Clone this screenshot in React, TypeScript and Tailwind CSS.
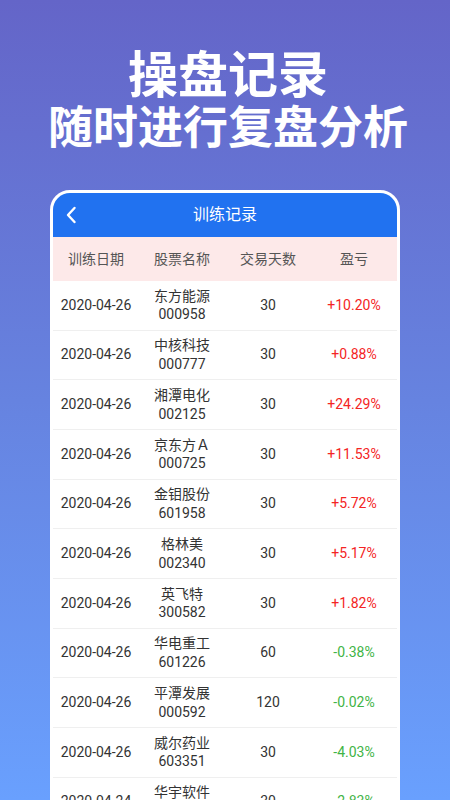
import React from 'react';

type Record = {
  date: string;
  name: string;
  code: string;
  days: number;
  pnl: string;
};

const records: Record[] = [
  { date: '2020-04-26', name: '东方能源', code: '000958', days: 30, pnl: '+10.20%' },
  { date: '2020-04-26', name: '中核科技', code: '000777', days: 30, pnl: '+0.88%' },
  { date: '2020-04-26', name: '湘潭电化', code: '002125', days: 30, pnl: '+24.29%' },
  { date: '2020-04-26', name: '京东方Ａ', code: '000725', days: 30, pnl: '+11.53%' },
  { date: '2020-04-26', name: '金钼股份', code: '601958', days: 30, pnl: '+5.72%' },
  { date: '2020-04-26', name: '格林美', code: '002340', days: 30, pnl: '+5.17%' },
  { date: '2020-04-26', name: '英飞特', code: '300582', days: 30, pnl: '+1.82%' },
  { date: '2020-04-26', name: '华电重工', code: '601226', days: 60, pnl: '-0.38%' },
  { date: '2020-04-26', name: '平潭发展', code: '000592', days: 120, pnl: '-0.02%' },
  { date: '2020-04-26', name: '威尔药业', code: '603351', days: 30, pnl: '-4.03%' },
  { date: '2020-04-24', name: '华宇软件', code: '300271', days: 30, pnl: '-2.83%' },
];

const font = { fontFamily: 'Roboto, "Noto Sans CJK SC", sans-serif' };

export default function App() {
  return (
    <div
      className="w-[450px] h-[800px] overflow-hidden bg-gradient-to-b from-[#6465c8] via-[#6683e0] to-[#69a0fe]"
      style={font}
    >
      <div className="pt-[44px] flex flex-col items-center text-white font-bold" style={{ fontFamily: '"Noto Sans CJK SC", sans-serif' }}>
        <div className="text-[50px] leading-[54px] translate-x-[3px]">操盘记录</div>
        <div className="text-[45px] leading-[50px] mt-[2px] translate-x-[3px]">随时进行复盘分析</div>
      </div>

      <div className="mt-[40px] mx-[50px] border-[3px] border-white rounded-[20px] overflow-hidden bg-white h-[700px]">
        <div className="h-[44px] bg-[#2172f0] flex items-center relative">
          <svg className="absolute left-[12px] top-[13px]" width="12" height="18" viewBox="0 0 12 18" fill="none">
            <path d="M9.5 2 L3 9 L9.5 16" stroke="white" strokeWidth="2.4" strokeLinecap="round" strokeLinejoin="round" />
          </svg>
          <div className="flex-1 text-center text-white text-[16px]">训练记录</div>
        </div>

        <div className="h-[44px] bg-[#fde9e9] grid grid-cols-4 items-center text-center text-[14px] text-[#555]">
          <div>训练日期</div>
          <div>股票名称</div>
          <div>交易天数</div>
          <div>盈亏</div>
        </div>

        {records.map((r, i) => (
          <div
            key={i}
            className="h-[49.67px] border-b border-[#efefef] grid grid-cols-4 items-center text-center text-[14px] text-[#333]"
          >
            <div>{r.date}</div>
            <div className="flex flex-col leading-[18.5px]">
              <span>{r.name}</span>
              <span>{r.code}</span>
            </div>
            <div>{r.days}</div>
            <div className={r.pnl.startsWith('+') ? 'text-[#f42424]' : 'text-[#3fb446]'}>{r.pnl}</div>
          </div>
        ))}
      </div>
    </div>
  );
}
